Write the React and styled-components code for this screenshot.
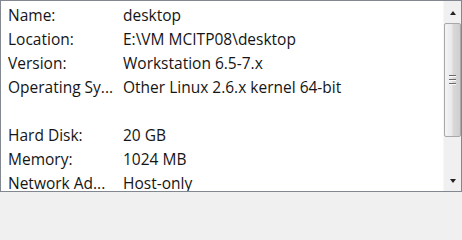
import styled, { createGlobalStyle } from "styled-components";

const rows = [
  { label: "Name:", value: "desktop" },
  { label: "Location:", value: "E:\\VM MCITP08\\desktop" },
  { label: "Version:", value: "Workstation 6.5-7.x" },
  { label: "Operating Sy...", value: "Other Linux 2.6.x kernel 64-bit" },
  null,
  { label: "Hard Disk:", value: "20 GB" },
  { label: "Memory:", value: "1024 MB" },
  { label: "Network Ad...", value: "Host-only" },
];

const App = () => {
  return (
    <>
      <GlobalStyle />
      <Frame>
        <List>
          {rows.map((row, i) =>
            row ? (
              <Row key={i}>
                <Label>{row.label}</Label>
                <Value>{row.value}</Value>
              </Row>
            ) : (
              <Row key={i} />
            )
          )}
        </List>
        <ScrollBar>
          <ArrowButton>
            <Arrow up />
          </ArrowButton>
          <Track>
            <Thumb>
              <Grip />
              <Grip />
              <Grip />
            </Thumb>
          </Track>
          <ArrowButton>
            <Arrow />
          </ArrowButton>
        </ScrollBar>
      </Frame>
    </>
  );
};

export default App;

const GlobalStyle = createGlobalStyle`
  html, body {
    margin: 0;
    padding: 0;
    background: #f0f0f0;
  }
  body {
    width: 462px;
    height: 200px;
    overflow: hidden;
    font-family: "Open Sans", "Noto Sans", sans-serif;
  }
`;

const Frame = styled.div`
  box-sizing: border-box;
  width: 462px;
  height: 192px;
  border: 1px solid #828790;
  background: #fff;
  display: flex;
  overflow: hidden;
`;

const List = styled.div`
  flex: 1;
  padding: 2px 0 0 7px;
  overflow: hidden;
`;

const Row = styled.div`
  display: grid;
  grid-template-columns: 115px 1fr;
  height: 24px;
  line-height: 24px;
  font-size: 15.5px;
  color: #151515;
  white-space: nowrap;
`;

const Label = styled.span`
  overflow: hidden;
`;

const Value = styled.span``;

const ScrollBar = styled.div`
  width: 17px;
  display: flex;
  flex-direction: column;
  background: #f0f0f0;
  border-left: 1px solid #f7f7f7;
`;

const ArrowButton = styled.div`
  height: 17px;
  display: flex;
  align-items: center;
  justify-content: center;
  flex-shrink: 0;
`;

const Arrow = styled.div`
  width: 0;
  height: 0;
  border-left: 3.5px solid transparent;
  border-right: 3.5px solid transparent;
  ${(p) =>
    p.up
      ? "border-bottom: 4px solid #222; margin-top: 6px;"
      : "border-top: 4px solid #222; margin-bottom: 4px;"}
`;

const Track = styled.div`
  flex: 1;
  padding-top: 5px;
`;

const Thumb = styled.div`
  box-sizing: border-box;
  height: 114px;
  border: 1px solid #a8a8a8;
  border-radius: 2px;
  background: linear-gradient(to right, #f4f4f4 0%, #e9e9e9 45%, #d8d8d8 55%, #cfcfcf 100%);
  display: flex;
  flex-direction: column;
  align-items: center;
  justify-content: center;
  gap: 2px;
`;

const Grip = styled.div`
  width: 7px;
  height: 1px;
  background: #6a6a6a;
  border-bottom: 1px solid #fafafa;
`;
